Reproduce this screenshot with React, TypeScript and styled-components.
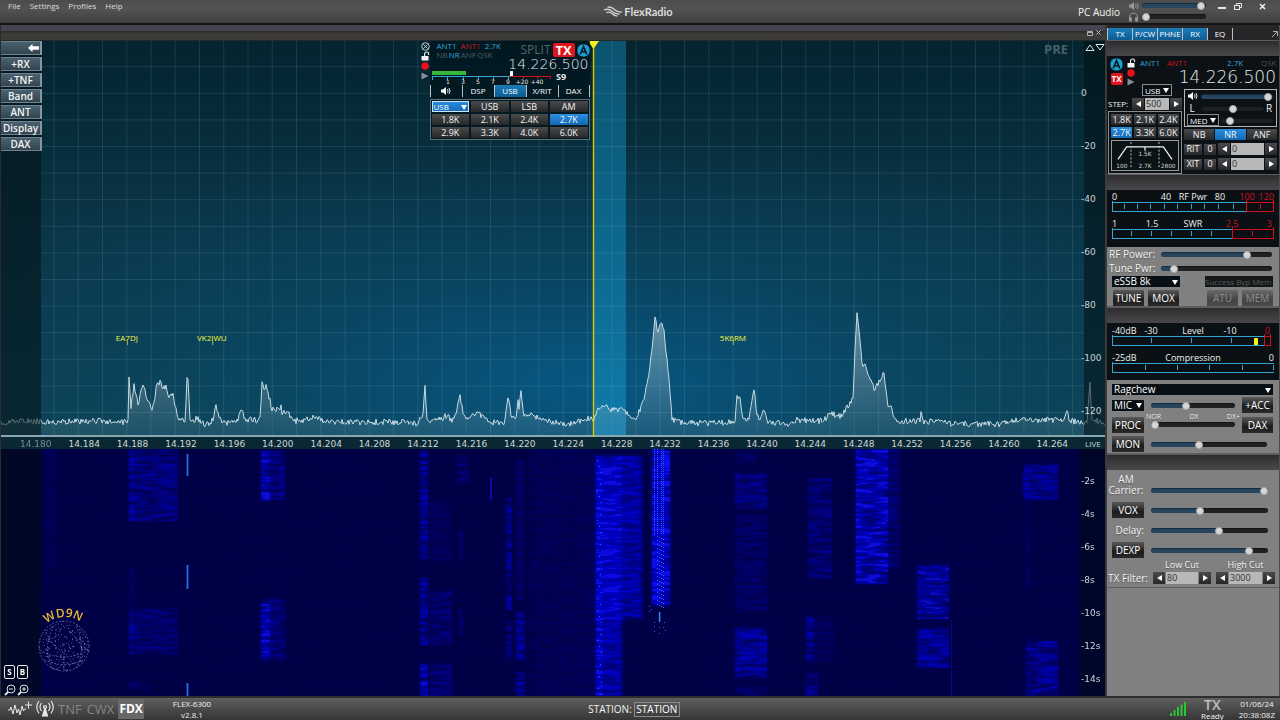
import React from 'react';
import styled, { createGlobalStyle, css } from 'styled-components';

const UI = `'Open Sans', 'Noto Sans', sans-serif`;
const DIGITS = `'DejaVu Sans', 'Liberation Sans', sans-serif`;
const THIN = `'DejaVu Sans Light', 'DejaVu Sans', sans-serif`;
const CYAN = '#35a5d6';
const RED = '#d0101c';

const Global = createGlobalStyle`
  *, *::before, *::after { box-sizing: border-box; }
  body { margin: 0; background: #808080; }
  button, input, select { font-family: inherit; margin: 0; padding: 0; border: 0; border-radius: 0; }
  svg { display: block; }
`;

/* ---------- page frame ---------- */

const Shell = styled.div`
  min-height: 100vh;
  display: grid;
  grid-template-rows: 25px 1fr 24px;
  font: 10px/12px ${UI};
  color: #f2f2f2;
`;

const TopBar = styled.header`
  display: grid;
  grid-template-columns: 1fr auto 1fr;
  background: linear-gradient(#4c4c4c, #535353 40%, #3e3e3e);
  border-bottom: 2px solid #141414;
`;

const Menu = styled.nav`
  display: flex;
  gap: 9px;
  padding-left: 8px;
  font-size: 8px;
`;

const MenuLink = styled.a`
  color: #ddd;
  text-decoration: none;
  line-height: 12px;
`;

const Logo = styled.div`
  display: flex;
  align-items: center;
  gap: 1px;
  padding-right: 4px;
  font: 700 11px/14px 'Lato', sans-serif;
  color: #dcdcdc;
`;

const AudioArea = styled.div`
  display: flex;
  justify-content: flex-end;
  padding-right: 12px;
`;

const AudioLabel = styled.span`
  padding: 6px 8px 0 0;
`;

const AudioSliders = styled.div`
  display: grid;
  grid-template-columns: 12px 64px;
  grid-auto-rows: 11px;
  align-items: center;
  gap: 0 2px;
`;

const WindowButtons = styled.div`
  display: flex;
  gap: 4px;
  padding: 1px 0 0 10px;
`;

const Spacer = styled.span`
  width: 4px;
`;

const IconButton = styled.button`
  display: grid;
  place-items: center;
  width: 12px;
  height: 10px;
  background: none;
  color: #e8e8e8;
`;

const Body = styled.div`
  display: grid;
  grid-template-columns: minmax(0, 1fr) 175px;
`;

const Pan = styled.main`
  display: grid;
  grid-template-rows: 16px minmax(396px, 396fr) 12px minmax(247px, 247fr);
  border-left: 1px solid #2c2c2c;
  min-width: 0;
`;

const PanTitle = styled.div`
  display: flex;
  justify-content: flex-end;
  align-items: center;
  padding-right: 2px;
  background: linear-gradient(#45454f 0 6px, #2e2c2b 6px, #403d3a 10px, #3a3a3a);
  border-bottom: 1px solid #20282c;
`;

const SmallIconButton = styled(IconButton)`
  width: 9px;
  height: 8px;
`;

/* ---------- spectrum ---------- */

const Layered = styled.section`
  position: relative;
  overflow: hidden;
`;

const Plot = styled.svg`
  position: absolute;
  inset: 0;
  width: 100%;
  height: 100%;
`;

const SideButtons = styled.div`
  position: absolute;
  left: 0;
  top: 0;
  width: 41px;
  display: grid;
  grid-auto-rows: 14px;
  gap: 2px;
`;

const SideButton = styled.button`
  background: linear-gradient(#4a6170, #334450);
  border: 1px solid #6d808c;
  border-right: 2px solid #8796a0;
  border-left: 0;
  color: #f4f4f4;
  font-size: 10px;
  font-weight: 600;
  line-height: 10px;
  display: flex;
  align-items: center;
  justify-content: center;
`;

const Scale = styled.div<{ $top: number }>`
  position: absolute;
  top: 0;
  right: 0;
  bottom: 0;
  width: 24px;
  padding-top: ${p => p.$top}px;
  display: flex;
  flex-direction: column;
  font: 9px/12px ${DIGITS};
  color: #c8d4d8;
`;

const ScaleMark = styled.span`
  flex: 1;
  display: flex;
  align-items: center;
  white-space: nowrap;
`;

const Pre = styled.div`
  position: absolute;
  right: 37px;
  top: 0;
  font-size: 13px;
  font-weight: 700;
  line-height: 16px;
  color: #4a6068;
`;

const ScaleArrows = styled.div`
  position: absolute;
  right: 0;
  top: 2px;
`;

const Spot = styled.span<{ $x: number }>`
  position: absolute;
  left: ${p => p.$x}%;
  top: 291px;
  transform: translateX(-50%);
  font-size: 8px;
  line-height: 12px;
  color: #f0f83c;
  &::after {
    content: '';
    position: absolute;
    left: 50%;
    top: 7px;
    width: 1px;
    height: 6px;
    background: #a8b43a;
  }
`;

const FreqScale = styled.div`
  display: grid;
  grid-template-columns: minmax(0, 1fr) 20px;
  background: #0a2833;
  font: 9px/14px ${DIGITS};
  color: #cdd6d8;
`;

const FreqMarks = styled.div`
  display: grid;
  grid-template-columns: repeat(22, minmax(0, 1fr));
  padding-left: 19px;
`;

const FreqMark = styled.span<{ $dim?: boolean }>`
  opacity: ${p => (p.$dim ? 0.55 : 1)};
  white-space: nowrap;
`;

const Live = styled.span`
  font: 8px/13px ${UI};
`;

/* ---------- slice flag ---------- */

const Flag = styled.div`
  position: absolute;
  left: 38%;
  top: 0;
  width: 169px;
  display: grid;
  grid-template-columns: 9px minmax(0, 1fr);
`;

const FlagIcons = styled.div`
  display: grid;
  grid-auto-rows: 10px;
  align-content: start;
  justify-items: center;
  align-items: center;
`;

const FlagBody = styled.div`
  background: rgba(3, 22, 30, 0.82);
`;

const FlagHead = styled.div`
  display: grid;
  grid-template-columns: 1fr auto auto auto;
  gap: 2px;
  height: 16px;
  align-items: center;
  padding-left: 7px;
`;

const Tags = styled.div<{ $gap?: number }>`
  display: flex;
  gap: ${p => p.$gap ?? 4}px;
  font-size: 8px;
  line-height: 9px;
  white-space: nowrap;
`;

const Tag = styled.span<{ $c: string }>`
  color: ${p => p.$c};
`;

const Split = styled.span`
  font-size: 12px;
  line-height: 14px;
  color: #56646a;
`;

const TxBadge = styled.span<{ $big?: boolean }>`
  display: grid;
  place-items: center;
  width: ${p => (p.$big ? 22 : 12)}px;
  height: ${p => (p.$big ? 14 : 12)}px;
  border-radius: 2px;
  background: #e0141c;
  color: #fff;
  font-size: ${p => (p.$big ? 13 : 8)}px;
  font-weight: 700;
  line-height: 12px;
`;

const Frequency = styled.div<{ $size: number }>`
  font-family: ${THIN};
  font-weight: 200;
  font-size: ${p => p.$size}px;
  line-height: 14px;
  padding-right: 1px;
  text-align: right;
  color: #e4eaec;
`;

const TabRow = styled.div<{ $cols: string }>`
  display: grid;
  grid-template-columns: ${p => p.$cols};
  align-items: center;
  border-right: 1px solid #b8c0c4;
`;

const Tab = styled.button<{ $on?: boolean }>`
  height: 12px;
  display: grid;
  place-items: center;
  font-size: 8px;
  line-height: 10px;
  color: #fff;
  border-left: 1px solid #b8c0c4;
  background: ${p => (p.$on ? 'linear-gradient(#1c7cb8, #0d5c92)' : 'transparent')};
`;

const FlagGrid = styled.div`
  display: grid;
  grid-template-columns: repeat(4, minmax(0, 1fr));
  gap: 2px;
  margin-top: 2px;
  padding: 1px;
  border: 1px solid #5d7078;
`;

const blue = css`background: linear-gradient(#2a8fe0, #1268b4);`;
const dark = css`background: linear-gradient(#4a4a4c, #252729);`;

const Key = styled.button<{ $on?: boolean }>`
  height: 11px;
  ${p => (p.$on ? blue : dark)}
  color: #f4f4f4;
  font-size: 9px;
  line-height: 10px;
`;

const Choice = styled.select<{ $on?: boolean; $size?: number }>`
  appearance: none;
  height: 11px;
  min-width: 0;
  width: 100%;
  padding-left: 2px;
  color: #fff;
  font-size: ${p => p.$size ?? 8}px;
  line-height: 11px;
  background: ${p => (p.$on ? 'linear-gradient(#2a8fe0, #1268b4)' : '#081015')};
  outline: ${p => (p.$on ? '1px solid #cfe4f4' : 'none')};
  outline-offset: -1px;
`;

const SelectWrap = styled.label<{ $w?: string; $line?: boolean }>`
  position: relative;
  display: block;
  width: ${p => p.$w ?? '100%'};
  height: ${p => (p.$line ? 12 : 11)}px;
  line-height: 0;
  border: ${p => (p.$line ? '1px solid #8a8a8a' : '0')};
  select { height: 100%; display: block; }
  &::after {
    content: '';
    position: absolute;
    right: 2px;
    top: 50%;
    margin-top: -2px;
    border: 3px solid transparent;
    border-top: 5px solid #fff;
    border-bottom: 0;
  }
`;

/* ---------- control column ---------- */

const Side = styled.aside`
  background: #808080;
  border-left: 2px solid #3a3a3a;
  border-right: 1px solid #4c4c4c;
  min-width: 0;
`;

const SideTabs = styled.div`
  display: grid;
  grid-template-columns: repeat(5, 25px) 1fr;
  align-items: center;
  height: 15px;
  padding: 3px 0 1px;
  background: #262628;
`;

const TabEnd = styled.div`
  display: flex;
  align-items: center;
  justify-content: flex-end;
  height: 12px;
  border-left: 1px solid #b8c0c4;
`;

const Grip = styled.div`
  height: 16px;
  background: linear-gradient(#2c2c2e, #3c3c3e 50%, #47474a);
  border-top: 1px solid #5c5c5c;
`;

const SliceBox = styled.section`
  height: 118px;
  background: #0b1115;
  padding: 1px 2px 0 1px;
`;

const SliceHead = styled.div`
  display: grid;
  grid-template-columns: 12px 10px minmax(0, 1fr);
  gap: 0 4px;
  padding-left: 2px;
  height: 28px;
`;

const Stack = styled.div<{ $gap: number }>`
  display: grid;
  align-content: start;
  justify-items: center;
  padding-top: 1px;
  gap: ${p => p.$gap}px;
`;

const Antennas = styled.div`
  display: grid;
  grid-template-columns: 27px 1fr 34px 16px;
  font-size: 8px;
  line-height: 11px;
  padding-bottom: 2px;
`;

const SliceCols = styled.div`
  display: grid;
  grid-template-columns: 74px minmax(0, 1fr);
  gap: 2px;
`;

const ModeLine = styled.div`
  padding: 0 0 2px 34px;
  margin-top: -1px;
`;

const Stepper = styled.div<{ $label?: string }>`
  display: grid;
  grid-template-columns: ${p => p.$label ?? ''} 12px minmax(0, 1fr) 12px;
  align-items: center;
  gap: 1px;
`;

const StepKey = styled.button<{ $next?: boolean }>`
  height: 12px;
  ${dark}
  display: grid;
  place-items: center;
  &::before {
    content: '';
    border: 3px solid transparent;
    border-left: ${p => (p.$next ? '5px solid #fff' : '0')};
    border-right: ${p => (p.$next ? '0' : '5px solid #fff')};
  }
`;

const NumberBox = styled.input`
  width: 100%;
  height: 12px;
  background: #b8b8b8;
  color: #333;
  font-size: 9px;
  line-height: 12px;
  padding-left: 1px;
`;

const TinyLabel = styled.label`
  font-size: 8px;
  line-height: 12px;
`;

const FilterBox = styled.div`
  margin-top: 1px;
  border: 1px solid #8c8c8c;
  padding: 2px;
  display: grid;
  grid-template-columns: repeat(3, minmax(0, 1fr));
  gap: 2px;
`;

const FilterShape = styled.svg`
  grid-column: 1 / -1;
  width: 100%;
  height: 31px;
  border: 1px solid #9a9a9a;
  background: #0a1216;
`;

const VolumeBox = styled.div`
  margin-top: 4px;
  border: 1px solid #b4b4b4;
  padding: 0 2px 1px;
  height: 38px;
  display: grid;
  grid-template-rows: repeat(3, 12px);
`;

const Line = styled.div<{ $cols: string; $gap?: number }>`
  display: grid;
  grid-template-columns: ${p => p.$cols};
  gap: ${p => p.$gap ?? 2}px;
  align-items: center;
`;

const NoiseKeys = styled(Line)`
  margin: 2px 0 3px;
`;

const RitLine = styled(Line)`
  margin-bottom: 3px;
`;

const Range = styled.input.attrs({ type: 'range' })<{ $v: number; $plain?: boolean }>`
  appearance: none;
  display: block;
  width: 100%;
  min-width: 0;
  height: 9px;
  background: transparent;
  &::-webkit-slider-runnable-track {
    height: 5px;
    border-radius: 3px;
    background: ${p =>
      p.$plain
        ? '#1c2024'
        : `linear-gradient(90deg, #27455f ${p.$v}%, #1f2123 ${p.$v}%)`};
    box-shadow: inset 0 1px 1px rgba(0, 0, 0, 0.4);
  }
  &::-webkit-slider-thumb {
    appearance: none;
    width: 8px;
    height: 8px;
    margin-top: -1px;
    border-radius: 50%;
    border: 1px solid #a8a8a8;
    background: #d8d8d8;
  }
`;

const MeterBox = styled.section`
  background: #0a1014;
  height: 57px;
`;

const Controls = styled.section<{ $h: number; $top?: number }>`
  min-height: ${p => p.$h}px;
  padding-top: ${p => p.$top ?? 0}px;
  background: #808080;
  border-bottom: 1px solid #5e5e5e;
  text-shadow: 0 1px 1px rgba(0, 0, 0, 0.3);
`;

const PowerLine = styled.div`
  display: grid;
  grid-template-columns: 46px minmax(0, 1fr);
  gap: 6px;
  align-items: center;
  height: 14px;
  padding: 0 7px 0 2px;
  white-space: nowrap;
`;

const ProfileLine = styled.div`
  display: flex;
  justify-content: space-between;
  padding: 1px 6px 2px 5px;
`;

const Memory = styled.div`
  width: 68px;
  height: 11px;
  background: #15181a;
  color: #57605c;
  font-size: 8px;
  line-height: 11px;
  white-space: nowrap;
`;

const ButtonLine = styled.div`
  display: grid;
  grid-template-columns: 31px 31px 1fr 31px 31px;
  gap: 4px;
  padding: 1px 6px 0 6px;
`;

const Push = styled.button`
  height: 16px;
  background: linear-gradient(#5a5a5a, #1c1c1c 60%, #2a2a2a);
  color: #fff;
  font-size: 10px;
  line-height: 14px;
  white-space: nowrap;
  text-align: center;
  &:disabled { color: #8c8c8c; background: linear-gradient(#6a6a6a, #444 60%, #4a4a4a); }
`;

const Mic = styled.div`
  display: grid;
  grid-template-columns: 32px minmax(0, 1fr) 31px;
  grid-template-rows: 16px 24px 14px;
  gap: 0 7px;
  align-items: center;
  padding: 0 6px 0 5px;
`;

const ProcRange = styled.div`
  align-self: start;
  font-size: 7px;
  line-height: 7px;
`;

const ProcMarks = styled.div`
  display: flex;
  justify-content: space-between;
  margin: 0 -5px;
`;

const Wide = styled.div`
  grid-column: 2 / -1;
  padding-right: 6px;
`;

const Vox = styled.div`
  display: grid;
  grid-template-columns: 36px minmax(0, 1fr);
  grid-auto-rows: 20px;
  gap: 0 7px;
  align-items: center;
  padding: 10px 11px 0 1px;
  text-align: right;
  ${Push} { margin-left: 4px; width: 32px; }
`;

const TwoLine = styled.label`
  line-height: 11px;
  text-align: center;
  padding-bottom: 10px;
`;

const CutGrid = styled.div`
  display: grid;
  grid-template-columns: 40px 58px 59px;
  gap: 0 5px;
  align-items: center;
  padding: 0 1px 3px;
  white-space: nowrap;
`;

const CutLabel = styled.span`
  font-size: 9px;
  line-height: 10px;
  padding-bottom: 2px;
  text-align: center;
`;

/* ---------- waterfall and footer ---------- */

const CornerTools = styled.div`
  position: absolute;
  left: 3px;
  bottom: 2px;
  display: grid;
  grid-template-columns: 11px 11px;
  gap: 5px 2px;
`;

const LetterKey = styled.button`
  height: 14px;
  border: 1px solid #e8e8e8;
  border-radius: 2px;
  background: #060a20;
  color: #fff;
  font-size: 8px;
  font-weight: 700;
  line-height: 10px;
`;

const Badge = styled.svg`
  position: absolute;
  left: 33px;
  bottom: 24px;
  width: 60px;
  height: 66px;
  overflow: visible;
`;

const Footer = styled.footer`
  display: grid;
  grid-template-columns: 1fr auto 1fr;
  align-items: center;
  background: linear-gradient(#606060, #4e4e4e 40%, #363636);
  border-top: 2px solid #2e2e2e;
`;

const FooterLeft = styled.div`
  display: flex;
  align-items: center;
  gap: 3px;
  padding-left: 7px;
`;

const Toggle = styled.button<{ $on?: boolean }>`
  height: 20px;
  padding: 0 1px;
  background: ${p => (p.$on ? '#686868' : 'transparent')};
  color: ${p => (p.$on ? '#fff' : '#858585')};
  font-size: ${p => (p.$on ? 12 : 13)}px;
  font-weight: ${p => (p.$on ? 700 : 400)};
  line-height: 20px;
`;

const Centered = styled.div<{ $ml?: number }>`
  margin-left: ${p => p.$ml ?? 0}px;
  font-size: 8px;
  line-height: 11px;
  text-align: center;
`;

const Station = styled.label`
  display: flex;
  align-items: center;
  gap: 2px;
  padding-right: 12px;
`;

const StationInput = styled.input`
  width: 46px;
  height: 15px;
  border: 1px solid #8a8a8a;
  background: transparent;
  color: #fff;
  font-size: 10px;
  text-align: center;
`;

const FooterRight = styled.div`
  display: flex;
  align-items: center;
  justify-content: flex-end;
  padding-right: 5px;
  gap: 15px;
`;

const TxState = styled.div`
  font-size: 8px;
  line-height: 9px;
  text-align: center;
  strong {
    display: block;
    font-size: 14px;
    font-weight: 600;
    line-height: 13px;
    color: #c0c0c0;
  }
`;

/* ---------- icons ---------- */

const Speaker = ({ c = '#fff', w = 12 }: { c?: string; w?: number }) => (
  <svg width={w} height="10" viewBox="0 0 12 10" fill="none" stroke={c}>
    <path d="M1 3.5h2L6 1v8L3 6.5H1z" fill={c} stroke="none" />
    <path d="M7.5 3.2q1.2 1.8 0 3.6M9 2q2.2 3 0 6" strokeWidth="0.9" />
  </svg>
);

const Headphones = () => (
  <svg width="11" height="10" viewBox="0 0 11 10" fill="none" stroke="#9a9a9a">
    <path d="M1.5 7V5.2a4 4 0 0 1 8 0V7" />
    <rect x="1.5" y="5.8" width="1.8" height="3.2" fill="#9a9a9a" />
    <rect x="7.7" y="5.8" width="1.8" height="3.2" fill="#9a9a9a" />
  </svg>
);

const SliceA = () => (
  <svg width="13" height="13" viewBox="0 0 13 13">
    <rect x="0.5" y="0.5" width="12" height="12" rx="5" fill="#1e9fd0" />
    <path d="M3.2 10.5 6.5 2.5l3.3 8M4.6 7.8h3.8" fill="none" stroke="#04161e" strokeWidth="1.6" />
  </svg>
);

const Unlock = () => (
  <svg width="9" height="10" viewBox="0 0 9 10">
    <rect x="0.5" y="5" width="7" height="4.5" fill="#f4f4f4" />
    <path d="M3.6 5V3a2 2 0 0 1 4 0v1" fill="none" stroke="#f4f4f4" strokeWidth="1.1" />
  </svg>
);

const Dot = () => (
  <svg width="8" height="8" viewBox="0 0 8 8"><circle cx="4" cy="4" r="3.7" fill="#e8101c" /></svg>
);

const Play = () => (
  <svg width="8" height="8" viewBox="0 0 8 8"><path d="M0.5 0.5 7.5 4l-7 3.5z" fill="#8a8f92" /></svg>
);

const CloseRound = () => (
  <svg width="9" height="9" viewBox="0 0 9 9" fill="none" stroke="#d8dee0" strokeWidth="0.9">
    <circle cx="4.5" cy="4.5" r="3.8" />
    <path d="M2.5 2.5l4 4m0-4l-4 4" />
  </svg>
);

const Magnifier = ({ plus }: { plus?: boolean }) => (
  <svg width="12" height="12" viewBox="0 0 12 12" fill="none" stroke="#d8e8dc">
    <circle cx="7" cy="5" r="4" />
    <path d="M5 5h4" />
    {plus && <path d="M7 3v4" />}
    <path d="M4 8 1 11" strokeWidth="2" />
  </svg>
);

/* ---------- data ---------- */

const TRACE: [number, number][] = [
  [0, 422], [30, 421], [60, 422], [90, 421], [126, 422], [128, 420], [129, 378], [131, 408], [134, 383],
  [138, 406], [142, 387], [145, 389], [147, 400], [152, 411], [154, 403], [157, 383], [161, 382], [163, 389],
  [166, 385], [169, 397], [173, 393], [178, 419], [185, 421], [187, 378], [188, 380], [190, 420], [197, 419],
  [206, 425], [213, 420], [216, 404], [219, 417], [225, 423], [238, 420], [241, 411], [247, 420], [258, 420],
  [260, 418], [262, 381], [264, 390], [266, 384], [268, 392], [272, 410], [279, 409], [281, 405], [282, 414],
  [288, 412], [294, 421], [310, 419], [316, 416], [326, 422], [400, 422], [418, 424], [423, 414], [425, 386],
  [427, 420], [436, 421], [448, 415], [452, 422], [456, 413], [460, 395], [463, 414], [467, 418], [478, 413],
  [490, 422], [504, 424], [508, 397], [511, 415], [516, 418], [518, 400], [519, 410], [521, 391], [524, 417],
  [533, 415], [541, 420], [567, 424], [592, 418], [594, 420], [598, 407], [602, 406], [610, 409], [624, 410],
  [631, 417], [636, 419], [644, 400], [649, 373], [653, 340], [655, 316], [658, 333], [661, 323], [664, 329],
  [666, 352], [669, 378], [672, 420], [685, 423], [720, 423], [735, 421], [737, 395], [740, 398], [743, 418],
  [749, 419], [754, 390], [757, 416], [760, 419], [764, 411], [767, 421], [786, 425], [796, 420], [823, 421],
  [830, 414], [842, 416], [853, 398], [855, 350], [857, 312], [859, 330], [862, 363], [866, 366], [870, 380],
  [875, 390], [884, 373], [888, 406], [891, 406], [894, 418], [898, 421], [920, 421], [921, 411], [923, 421],
  [958, 424], [1000, 424], [1020, 420], [1063, 420], [1067, 410], [1069, 421], [1087, 422], [1090, 381],
  [1092, 420], [1106, 423],
];

function tracePath() {
  let seed = 41;
  const rnd = () => ((seed = (seed * 16807) % 2147483647) / 2147483647) - 0.5;
  const out: string[] = [];
  for (let i = 0; i < TRACE.length - 1; i++) {
    const [x0, y0] = TRACE[i];
    const [x1, y1] = TRACE[i + 1];
    for (let x = x0; x < x1; x++) {
      const y = y0 + ((y1 - y0) * (x - x0)) / (x1 - x0);
      out.push(`${x} ${(y + rnd() * (x === x0 ? 2 : 6)).toFixed(1)}`);
    }
  }
  return out.join('L');
}
const TRACE_D = tracePath();

/* x, y, width, height, opacity of each received signal */
const SIGNALS: number[][] = [
  [129, 449, 49, 72, 0.4], [129, 449, 5, 72, 0.3], [129, 608, 49, 47, 0.28], [129, 608, 5, 47, 0.25],
  [129, 569, 6, 34, 0.2], [129, 682, 20, 8, 0.2], [261, 451, 24, 49, 0.4], [261, 451, 9, 50, 0.65],
  [261, 598, 24, 62, 0.3], [261, 604, 9, 56, 0.7], [420, 449, 8, 110, 0.55], [420, 578, 8, 67, 0.6],
  [420, 664, 8, 32, 0.75], [430, 664, 22, 32, 0.3], [430, 500, 22, 60, 0.14], [430, 590, 22, 55, 0.25],
  [457, 455, 12, 28, 0.25], [459, 530, 4, 30, 0.25], [459, 610, 4, 26, 0.3], [506, 498, 6, 112, 0.45],
  [506, 620, 6, 40, 0.3], [516, 460, 8, 140, 0.2], [516, 612, 9, 48, 0.55], [516, 672, 9, 24, 0.5],
  [530, 449, 66, 247, 0.1], [808, 478, 24, 101, 0.3], [735, 449, 22, 14, 0.15], [735, 473, 32, 36, 0.4],
  [735, 515, 32, 97, 0.22], [735, 628, 32, 50, 0.6], [735, 686, 32, 10, 0.2], [806, 616, 8, 46, 0.5],
  [814, 616, 20, 46, 0.15], [806, 672, 12, 24, 0.4], [856, 449, 44, 120, 0.25], [856, 449, 32, 135, 0.8],
  [856, 449, 5, 135, 0.6], [917, 565, 32, 54, 0.65], [917, 628, 32, 40, 0.6], [1024, 464, 34, 36, 0.5],
  [1022, 472, 7, 22, 0.4], [1026, 641, 32, 55, 0.5], [1026, 500, 5, 90, 0.12], [44, 449, 12, 120, 0.1],
];

const STRONG: number[][] = [
  [596, 456, 26, 240, 0.6], [596, 456, 46, 163, 0.6], [596, 456, 7, 240, 0.7], [652, 449, 18, 156, 1],
];

const DOTS: [number, number][] = [];
for (let y = 449; y < 534; y += 2) DOTS.push([654, y], [657, y], [661, y], [663, y]);
for (let y = 536; y < 607; y += 4) for (let k = 0; k < 4; k++) DOTS.push([657 + k * 2, y + ((k * 5) % 4)]);
for (let y = 460; y < 696; y += 6) DOTS.push([597 + ((y * 7) % 5), y]);
[[649, 606], [651, 609], [649, 611], [654, 622], [654, 626], [654, 631], [659, 627], [659, 633], [664, 622], [663, 627], [665, 630]]
  .forEach(([x, y]) => DOTS.push([x, y]));

const COLS = Array.from({ length: 43 }, (_, i) => 54 + i * 24.25);
const ROWS = Array.from({ length: 14 }, (_, i) => 66.7 + i * 26.6);
const DB = ['0', '-20', '-40', '-60', '-80', '-100', '-120'];
const FREQS = Array.from({ length: 22 }, (_, i) => `14.${180 + i * 4}`);

function globeDots() {
  let seed = 77;
  const rnd = () => (seed = (seed * 16807) % 2147483647) / 2147483647;
  const pts: [number, number][] = [];
  while (pts.length < 170) {
    const a = rnd() * Math.PI * 2;
    const r = 25 * Math.sqrt(rnd());
    pts.push([30 + r * Math.cos(a), 40 + r * Math.sin(a)]);
  }
  return pts;
}
const GLOBE = globeDots();

/* ---------- pieces ---------- */

const SpectrumPlot = () => (
  <Plot viewBox="1 41 1104 396" preserveAspectRatio="none">
    <defs>
      <linearGradient id="sky" x1="0" y1="0" x2="0" y2="1">
        <stop offset="0" stopColor="#04242f" />
        <stop offset="0.5" stopColor="#0a3648" />
        <stop offset="1" stopColor="#0e4152" />
      </linearGradient>
      <radialGradient id="glow" cx="0.53" cy="0.86" r="0.62">
        <stop offset="0" stopColor="#055c8c" stopOpacity="0.85" />
        <stop offset="0.5" stopColor="#085078" stopOpacity="0.4" />
        <stop offset="1" stopColor="#085078" stopOpacity="0" />
      </radialGradient>
      <linearGradient id="band" x1="0" y1="0" x2="0" y2="1">
        <stop offset="0" stopColor="#0b536f" />
        <stop offset="1" stopColor="#0f7bab" />
      </linearGradient>
      <linearGradient id="fill" x1="0" y1="0" x2="0" y2="1">
        <stop offset="0" stopColor="#c8dae4" stopOpacity="0.5" />
        <stop offset="1" stopColor="#a8c0c8" stopOpacity="0.1" />
      </linearGradient>
    </defs>
    <rect x="0" y="41" width="1106" height="396" fill="url(#sky)" />
    <rect x="0" y="41" width="1106" height="396" fill="url(#glow)" />
    <rect x="595" y="41" width="31" height="396" fill="url(#band)" />
    <g stroke="#8fc0d0" strokeOpacity="0.15">
      {COLS.map(x => <line key={x} x1={x} x2={x} y1="41" y2="437" />)}
      {ROWS.map(y => <line key={y} x1="41" x2="1084" y1={y} y2={y} />)}
    </g>
    <path d={`M0 437L${TRACE_D}L1106 437Z`} fill="url(#fill)" />
    <path d={`M${TRACE_D}`} fill="none" stroke="#c6dae2" strokeWidth="1" vectorEffect="non-scaling-stroke" />
    <rect x="0" y="41" width="41" height="396" fill="#041014" fillOpacity="0.55" />
    <rect x="1084" y="41" width="22" height="396" fill="#041014" fillOpacity="0.55" />
    <rect x="0" y="435" width="1106" height="2" fill="#8aa8b2" />
    <rect x="592.8" y="41" width="1.6" height="396" fill="#d2cc14" />
    <path d="M588 41h11l-5.5 8z" fill="#f4f01c" />
  </Plot>
);

const WaterfallPlot = () => (
  <Plot viewBox="1 449 1104 247" preserveAspectRatio="none">
    <defs>
      <filter id="streak" x="0" y="0" width="1" height="1">
        <feTurbulence type="fractalNoise" baseFrequency="0.05 0.28" numOctaves="3" seed="8" result="n" />
        <feColorMatrix in="n" values="0 0 0 0 0  0 0 0 0 0  0 0 0 0 0  3 0 0 0 -1" result="m" />
        <feComposite in="SourceGraphic" in2="m" operator="in" />
        <feGaussianBlur stdDeviation="0.7" />
      </filter>
      <filter id="soft" x="-0.1" y="-0.1" width="1.2" height="1.2"><feGaussianBlur stdDeviation="2" /></filter>
      <filter id="rows" x="0" y="0" width="1" height="1">
        <feTurbulence type="fractalNoise" baseFrequency="0.01 0.35" numOctaves="2" seed="3" />
        <feColorMatrix values="0 0 0 0 0  0 0 0 0 0  0 0 0 0 0.2  0.5 0 0 0 -0.12" />
      </filter>
    </defs>
    <rect x="0" y="449" width="1106" height="247" fill="#000044" />
    <rect x="41" y="449" width="1038" height="247" filter="url(#rows)" opacity="0.35" />
    <g fill="#0606c8" filter="url(#soft)">
      {SIGNALS.map(([x, y, w, h, o], i) => <rect key={i} x={x} y={y} width={w} height={h} opacity={o * 0.4} />)}
      {STRONG.map(([x, y, w, h, o], i) => <rect key={i} x={x} y={y} width={w} height={h} opacity={o * 0.7} />)}
    </g>
    <g fill="#0a0aee" filter="url(#streak)">
      <rect x="0" y="449" width="1106" height="247" fill="none" />
      {[...SIGNALS, ...STRONG].map(([x, y, w, h, o], i) => <rect key={i} x={x} y={y} width={w} height={h} opacity={o} />)}
    </g>
    <g fill="#2a62ff">
      {DOTS.map(([x, y], i) => <rect key={i} x={x} y={y} width="1" height="1" />)}
      <rect x="658.8" y="612" width="1.6" height="10" fill="#2a86ee" />
    </g>
    <g fill="#1f72e0">
      <rect x="186.6" y="454" width="1.8" height="22" />
      <rect x="186.6" y="565" width="1.8" height="24" />
      <rect x="186.6" y="683" width="1.8" height="13" />
    </g>
    <g fill="#0c0cc0">
      <rect x="490" y="478" width="2" height="22" opacity="0.8" />
      <rect x="951" y="620" width="1" height="76" opacity="0.5" />
    </g>
    <rect x="0" y="449" width="41" height="247" fill="#000a18" fillOpacity="0.65" />
    <rect x="1079" y="449" width="27" height="247" fill="#000a18" fillOpacity="0.6" />
  </Plot>
);

type MeterText = [number, string, string?];

const Meter = ({ y, labels, ticks, split, end = 164 }: {
  y: number; labels: MeterText[]; ticks: number[]; split: number; end?: number;
}) => (
  <g fontFamily="Open Sans, sans-serif" fontSize="9">
    {labels.map(([x, t, c]) => (
      <text key={t} x={x} y={y} fill={c ?? '#f0f0f0'} textAnchor={x < 10 ? 'start' : x > 160 ? 'end' : 'middle'}>{t}</text>
    ))}
    <g strokeWidth="1" stroke={CYAN} fill="none">
      <path d={`M5 ${y + 2.5}H${split}M5 ${y + 11.5}H${split}`} />
      <path d={ticks.filter(t => t <= split).map(t => `M${t + 0.5} ${y + 4}v5`).join('')} />
      <path d={`M5.5 ${y + 1}v11`} />
      <g stroke={RED}>
        {split < end && <path d={`M${split} ${y + 2.5}H${end}M${split} ${y + 11.5}H${end}M${split + 0.5} ${y}v12M${end - 0.5} ${y}v12`} />}
        <path d={ticks.filter(t => t > split).map(t => `M${t + 0.5} ${y + 4}v5`).join('')} />
      </g>
    </g>
  </g>
);

const Drop = ({ value, name, ...r }: { value: string; name: string; w?: string; line?: boolean; on?: boolean; size?: number }) => (
  <SelectWrap $w={r.w} $line={r.line}>
    <Choice aria-label={name} $on={r.on} $size={r.size} defaultValue={value}><option>{value}</option></Choice>
  </SelectWrap>
);

const Slider = ({ v, name, plain }: { v: number; name: string; plain?: boolean }) => (
  <Range aria-label={name} defaultValue={v} min={0} max={100} $v={v} $plain={plain} />
);

const SliceFlag = () => (
  <Flag>
    <FlagIcons><CloseRound /><Unlock /><Dot /><Play /></FlagIcons>
    <FlagBody>
      <FlagHead>
        <div>
          <Tags><Tag $c={CYAN}>ANT1</Tag><Tag $c={RED}>ANT1</Tag><Tag $c={CYAN}>2.7K</Tag></Tags>
          <Tags $gap={1}><Tag $c="#4c5c62">NB</Tag><Tag $c={CYAN}>NR</Tag><Tag $c="#4c5c62">ANF</Tag><Tag $c="#4c5c62">QSK</Tag></Tags>
        </div>
        <Split>SPLIT</Split>
        <TxBadge $big>TX</TxBadge>
        <SliceA />
      </FlagHead>
      <Frequency $size={14}>14.226.500</Frequency>
      <svg width="100%" height="14" viewBox="0 0 160 14" fontFamily="DejaVu Sans, sans-serif" fontSize="6" fill="#e8e8e8">
        <rect x="2" y="0" width="34" height="4" fill="#35b83a" />
        <rect x="80" y="0" width="3" height="5" fill="#fff" />
        <path d="M2 5.5H80M2.5 5v4M17.5 5v4M33.5 5v4M48.5 5v4M63.5 5v4M78.5 5v4" stroke={CYAN} fill="none" />
        <path d="M80 5.5H121M93.5 5v3M107.5 5v3M120.5 5v3" stroke={RED} fill="none" />
        <g textAnchor="middle">
          <text x="18" y="13">1</text><text x="33" y="13">3</text><text x="48" y="13">5</text>
          <text x="63" y="13">7</text><text x="78" y="13">9</text><text x="92" y="13">+20</text><text x="107" y="13">+40</text>
        </g>
        <text x="126" y="9" fontFamily="Open Sans, sans-serif" fontSize="9" fontWeight="700">S9</text>
      </svg>
      <TabRow $cols="32px 32px 32px 32px 1fr">
        <Tab aria-label="Audio"><Speaker /></Tab><Tab>DSP</Tab><Tab $on>USB</Tab><Tab>X/RIT</Tab><Tab>DAX</Tab>
      </TabRow>
      <FlagGrid>
        <Drop value="USB" name="Mode" on />
        {['USB', 'LSB', 'AM', '1.8K', '2.1K', '2.4K', '2.7K', '2.9K', '3.3K', '4.0K', '6.0K'].map(t => (
          <Key key={t} $on={t === '2.7K'}>{t}</Key>
        ))}
      </FlagGrid>
    </FlagBody>
  </Flag>
);

const SlicePanel = () => (
  <SliceBox>
    <SliceHead>
      <Stack $gap={2}><SliceA /><TxBadge>TX</TxBadge></Stack>
      <Stack $gap={1}><Unlock /><Dot /><Play /></Stack>
      <div>
        <Antennas><Tag $c={CYAN}>ANT1</Tag><Tag $c={RED}>ANT1</Tag><Tag $c={CYAN}>2.7K</Tag><Tag $c="#4c5256">QSK</Tag></Antennas>
        <Frequency $size={17}>14.226.500</Frequency>
      </div>
    </SliceHead>
    <SliceCols>
      <div>
        <ModeLine><Drop value="USB" name="Slice mode" w="30px" line /></ModeLine>
        <Stepper $label="23px">
          <TinyLabel htmlFor="step">STEP:</TinyLabel>
          <StepKey aria-label="Smaller step" /><NumberBox id="step" defaultValue="500" /><StepKey $next aria-label="Larger step" />
        </Stepper>
        <FilterBox>
          {['1.8K', '2.1K', '2.4K', '2.7K', '3.3K', '6.0K'].map(t => <Key key={t} $on={t === '2.7K'}>{t}</Key>)}
          <FilterShape viewBox="0 0 68 30" fontFamily="DejaVu Sans, sans-serif" fontSize="6" fill="#d8d8d8">
            <path d="M6 19 15 6h38l9 13M34 6v4" fill="none" stroke="#f0f0f0" strokeWidth="1.3" />
            <path d="M19.5 1v28M48.5 1v28" stroke="#d0d0d0" strokeDasharray="2 2" />
            <g textAnchor="middle"><text x="34" y="15">1.5K</text><text x="34" y="28">2.7K</text><text x="10" y="28">100</text><text x="58" y="28">2800</text></g>
          </FilterShape>
        </FilterBox>
      </div>
      <div>
        <VolumeBox>
          <Line $cols="12px 1fr"><Speaker /><Slider v={97} name="Slice volume" /></Line>
          <Line $cols="12px 1fr 8px"><span>&nbsp;L</span><Slider v={50} name="Pan" plain /><span>R</span></Line>
          <Line $cols="32px 1fr"><Drop value="MED" name="AGC" line /><Slider v={10} name="AGC threshold" plain /></Line>
        </VolumeBox>
        <NoiseKeys $cols="1fr 1fr 1fr" $gap={1}><Key>NB</Key><Key $on>NR</Key><Key>ANF</Key></NoiseKeys>
        {['RIT', 'XIT'].map(t => (
          <RitLine key={t} $cols="18px 12px 1fr" $gap={2}>
            <Key>{t}</Key><Key>0</Key>
            <Stepper><StepKey aria-label={`${t} down`} /><NumberBox aria-label={t} defaultValue="0" /><StepKey $next aria-label={`${t} up`} /></Stepper>
          </RitLine>
        ))}
      </div>
    </SliceCols>
  </SliceBox>
);

const SidePanel = () => (
  <Side>
    <SideTabs>
      <Tab $on>TX</Tab><Tab $on>P/CW</Tab><Tab $on>PHNE</Tab><Tab $on>RX</Tab><Tab>EQ</Tab>
      <TabEnd><svg width="8" height="8" viewBox="0 0 8 8" fill="none" stroke="#b0b0b0"><path d="M1 7 6 2M2 1.5h4.5V6" /></svg></TabEnd>
    </SideTabs>
    <Grip />
    <SlicePanel />
    <Grip />
    <MeterBox>
      <svg width="100%" height="57" viewBox="0 0 172 57">
        <Meter y={10} split={139} ticks={[17, 30, 43, 57, 70, 84, 97, 111, 126, 153]}
          labels={[[5, '0'], [59, '40'], [86, 'RF Pwr'], [113, '80'], [140, '100', RED], [167, '120', RED]]} end={167} />
        <Meter y={37} split={125} ticks={[24, 44, 64, 84, 104, 145]}
          labels={[[5, '1'], [45, '1.5'], [86, 'SWR'], [125, '2.5', RED], [165, '3', RED]]} end={167} />
      </svg>
    </MeterBox>
    <Controls $h={60}>
      <PowerLine><span>RF Power:</span><Slider v={80} name="RF Power" /></PowerLine>
      <PowerLine><span>Tune Pwr:</span><Slider v={9} name="Tune Power" /></PowerLine>
      <ProfileLine><Drop value="eSSB 8k" name="Transmit profile" w="68px" size={10} /><Memory>Success Byp Mem</Memory></ProfileLine>
      <ButtonLine><Push>TUNE</Push><Push>MOX</Push><span /><Push disabled>ATU</Push><Push disabled>MEM</Push></ButtonLine>
    </Controls>
    <Grip />
    <MeterBox>
      <svg width="100%" height="57" viewBox="0 0 172 57">
        <Meter y={11} split={157} ticks={[44, 84, 124]} end={164}
          labels={[[5, '-40dB'], [44, '-30'], [86, 'Level'], [123, '-10'], [163, '0', RED]]} />
        <rect x="147" y="15" width="4" height="7" fill="#f4f01c" />
        <Meter y={38} split={167} ticks={[38, 70, 102, 135, 166]} end={167}
          labels={[[5, '-25dB'], [86, 'Compression'], [167, '0']]} />
      </svg>
    </MeterBox>
    <Controls $h={74} $top={3}>
      <ProfileLine><Drop value="Ragchew" name="Mic profile" size={10} /></ProfileLine>
      <Mic>
        <Drop value="MIC" name="Mic input" size={10} />
        <Slider v={41} name="Mic level" />
        <Push>+ACC</Push>
        <Push>PROC</Push>
        <ProcRange>
          <ProcMarks><span>NOR</span><span>DX</span><span>DX+</span></ProcMarks>
          <Slider v={0} name="Processor" />
        </ProcRange>
        <Push>DAX</Push>
        <Push>MON</Push>
        <Wide><Slider v={41} name="Monitor level" /></Wide>
      </Mic>
    </Controls>
    <Grip />
    <Controls $h={118}>
      <Vox>
        <TwoLine>AM<br />Carrier:</TwoLine><Slider v={100} name="AM Carrier" />
        <Push>VOX</Push><Slider v={41} name="VOX level" />
        <span>Delay:</span><Slider v={59} name="VOX delay" />
        <Push>DEXP</Push><Slider v={86} name="Expander" />
      </Vox>
      <CutGrid>
        <span /><CutLabel>Low Cut</CutLabel><CutLabel>High Cut</CutLabel>
        <span>TX Filter:</span>
        <Stepper><StepKey aria-label="Low cut down" /><NumberBox aria-label="Low Cut" defaultValue="80" /><StepKey $next aria-label="Low cut up" /></Stepper>
        <Stepper><StepKey aria-label="High cut down" /><NumberBox aria-label="High Cut" defaultValue="3000" /><StepKey $next aria-label="High cut up" /></Stepper>
      </CutGrid>
    </Controls>
  </Side>
);

export default function App() {
  return (
    <Shell>
      <Global />
      <TopBar>
        <Menu>{['File', 'Settings', 'Profiles', 'Help'].map(t => <MenuLink key={t} href="#">{t}</MenuLink>)}</Menu>
        <Logo>
          <svg width="20" height="11" viewBox="0 0 18 10" fill="none" stroke="#d0d0d0" strokeWidth="1.3">
            <path d="M4 1.2q3-1.2 6 1.8t7 2.5M1 3.5q4-1.5 7 1.2t7 2.8M3 6q3-1.2 5 .8t5 2.4" />
          </svg>
          FlexRadio
        </Logo>
        <AudioArea>
          <AudioLabel>PC Audio</AudioLabel>
          <AudioSliders>
            <Speaker c="#9a9a9a" /><Slider v={99} name="Speaker volume" />
            <Headphones /><Slider v={0} name="Headphone volume" />
          </AudioSliders>
          <WindowButtons>
            <IconButton aria-label="Minimize"><svg width="8" height="8" viewBox="0 0 8 8"><rect y="5" width="8" height="2" fill="#e8e8e8" /></svg></IconButton>
            <IconButton aria-label="Restore"><svg width="9" height="9" viewBox="0 0 9 9" fill="none" stroke="#e8e8e8"><rect x="0.5" y="3.5" width="5" height="4" /><path d="M2.5 3V1.5h5v4H6" /></svg></IconButton>
            <Spacer />
            <IconButton aria-label="Close"><svg width="7" height="7" viewBox="0 0 7 7" stroke="#f0f0f0" strokeWidth="1.5"><path d="M1 1l5 5M6 1 1 6" /></svg></IconButton>
          </WindowButtons>
        </AudioArea>
      </TopBar>
      <Body>
        <Pan>
          <PanTitle>
            <SmallIconButton aria-label="Float"><svg width="6" height="6" viewBox="0 0 6 6" fill="none" stroke="#b0b0b0"><path d="M0.5 1.5h5v4h-5zM0.5 2.5h5" /></svg></SmallIconButton>
            <SmallIconButton aria-label="Close panadapter"><svg width="5" height="5" viewBox="0 0 5 5" stroke="#c0c0c0"><path d="M0.5 0.5l4 4m0-4l-4 4" /></svg></SmallIconButton>
          </PanTitle>
          <Layered>
            <SpectrumPlot />
            <SideButtons>
              <SideButton aria-label="Collapse">
                <svg width="37" height="8" viewBox="0 0 37 8"><path d="M26 4l4.5-4v2.3H37v3.4h-6.5V8z" fill="#fff" /></svg>
              </SideButton>
              {['+RX', '+TNF', 'Band', 'ANT', 'Display', 'DAX'].map(t => <SideButton key={t}>{t}</SideButton>)}
            </SideButtons>
            <Spot $x={11.4}>EA7DJ</Spot>
            <Spot $x={19.1}>VK2IWU</Spot>
            <Spot $x={66.3}>5K6RM</Spot>
            <Pre>PRE</Pre>
            <Scale $top={25}>{DB.map(t => <ScaleMark key={t}>{t}</ScaleMark>)}</Scale>
            <ScaleArrows>
              <svg width="20" height="9" viewBox="0 0 20 9" fill="none" stroke="#dfe6e8"><path d="M1 7.5 5 2l4 5.5z" /><path d="M11 1.5h8L15 7z" /></svg>
            </ScaleArrows>
            <SliceFlag />
          </Layered>
          <FreqScale>
            <FreqMarks>{FREQS.map((t, i) => <FreqMark key={t} $dim={i === 0}>{t}</FreqMark>)}</FreqMarks>
            <Live>LIVE</Live>
          </FreqScale>
          <Layered>
            <WaterfallPlot />
            <Scale $top={15}>{[2, 4, 6, 8, 10, 12, 14].map(n => <ScaleMark key={n}>-{n}s</ScaleMark>)}</Scale>
            <Badge viewBox="0 0 60 66">
              <defs><path id="arc" d="M3 39a28 28 0 0 1 56 0" /></defs>
              <text fontFamily="Open Sans, sans-serif" fontSize="12" fontWeight="600" fill="#e8b830" textAnchor="middle">
                <textPath href="#arc" startOffset="48%">WD9N</textPath>
              </text>
              <g fill="none" stroke="#a8b0e0" strokeWidth="0.6" strokeDasharray="2 1.5" opacity="0.8">
                <circle cx="30" cy="40" r="25" />
                <path d="M30 52v12M30 52v-7h6M6 44q24 14 48 0M10 54q20 9 40 0M20 20q-12 20-2 42M42 20q11 22 0 42M12 26q5 12 14 18M35 26q10 6 14 20" />
              </g>
              <g fill="#c4c8f0" opacity="0.75">
                {GLOBE.map(([x, y], i) => <rect key={i} x={x} y={y} width="0.8" height="0.8" />)}
              </g>
            </Badge>
            <CornerTools>
              <LetterKey>S</LetterKey><LetterKey>B</LetterKey>
              <IconButton aria-label="Zoom out"><Magnifier /></IconButton><IconButton aria-label="Zoom in"><Magnifier plus /></IconButton>
            </CornerTools>
          </Layered>
        </Pan>
        <SidePanel />
      </Body>
      <Footer>
        <FooterLeft>
          <svg width="26" height="18" viewBox="0 0 26 18" fill="none" stroke="#e8e8e8">
            <path d="M1 10h2l1-3 2 7 2-9 2 8 1.5-4 1.5 6 2-9 1.5 5 1-2h1.5" />
            <path d="M18 5h7M21.5 1.5v7" />
          </svg>
          <svg width="18" height="18" viewBox="0 0 18 18" fill="none" stroke="#e8e8e8" strokeWidth="1.2">
            <path d="M9 8 6.5 16h5z" fill="#e8e8e8" />
            <circle cx="9" cy="7" r="1.5" />
            <path d="M5.5 11q-3-4 0-8M12.5 11q3-4 0-8M3 13.5q-4.5-6.5 0-12.5M15 13.5q4.5-6.5 0-12.5" />
          </svg>
          <Toggle>TNF</Toggle><Toggle>CWX</Toggle><Toggle $on>FDX</Toggle>
          <Centered $ml={26}>FLEX-6300<br />v2.8.1</Centered>
        </FooterLeft>
        <Station>STATION: <StationInput defaultValue="STATION" /></Station>
        <FooterRight>
          <svg width="16" height="14" viewBox="0 0 16 14" fill="#2cc832">
            <rect x="0" y="11" width="2" height="3" /><rect x="3.5" y="8" width="2" height="6" /><rect x="7" y="5" width="2" height="9" />
            <rect x="10.5" y="2.5" width="2" height="11.5" /><rect x="14" y="0" width="2" height="14" />
          </svg>
          <TxState><strong>TX</strong>Ready</TxState>
          <Centered>01/06/24<br />20:38:08Z</Centered>
        </FooterRight>
      </Footer>
    </Shell>
  );
}
